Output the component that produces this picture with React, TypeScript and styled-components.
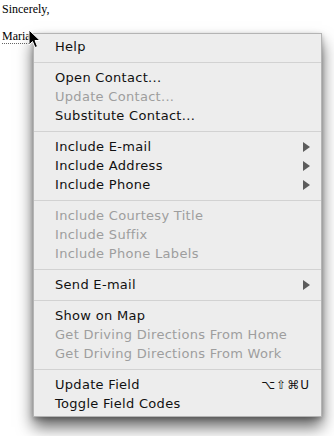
import React from "react";
import styled, { createGlobalStyle } from "styled-components";

const GlobalStyle = createGlobalStyle`
  html, body {
    margin: 0;
    padding: 0;
    background: #ffffff;
  }
`;

const Page = styled.div`
  position: relative;
  width: 334px;
  height: 436px;
  overflow: hidden;
  background: #ffffff;
`;

const Letter = styled.div`
  padding: 2px 0 0 2px;
  font-family: "Liberation Serif", "Times New Roman", serif;
  font-size: 12px;
  line-height: 14px;
  color: #000;
`;

const Line = styled.div<{ gap?: number }>`
  margin-top: ${(p) => p.gap ?? 0}px;
`;

const Field = styled.span`
  border-bottom: 1px dotted #666;
`;

const Cursor = styled.svg`
  position: absolute;
  left: 28px;
  top: 29px;
  z-index: 3;
`;

const Menu = styled.ul`
  position: absolute;
  left: 33px;
  top: 33px;
  width: 287px;
  margin: 0;
  padding: 3px 0;
  list-style: none;
  background: #ededed;
  border: 1px solid #b4b4b4;
  box-shadow: 0 10px 15px rgba(0, 0, 0, 0.6), 0 2px 5px rgba(0, 0, 0, 0.25);
  font-family: "DejaVu Sans", "Lucida Grande", sans-serif;
  font-size: 13px;
  letter-spacing: 0.3px;
  z-index: 2;
`;

const Item = styled.li<{ disabled?: boolean }>`
  height: 19px;
  display: flex;
  align-items: center;
  justify-content: space-between;
  padding: 0 11px 0 21px;
  color: ${(p) => (p.disabled ? "#9e9e9e" : "#111")};
  white-space: nowrap;
`;

const Separator = styled.li`
  height: 12px;
  display: flex;
  align-items: center;

  &::after {
    content: "";
    flex: 1;
    height: 1px;
    background: #d2d2d2;
  }
`;

const Arrow = styled.span`
  width: 0;
  height: 0;
  border-top: 5px solid transparent;
  border-bottom: 5px solid transparent;
  border-left: 7px solid #5c5c5c;
`;

const Shortcut = styled.span`
  font-size: 12px;
  letter-spacing: 1px;
  color: #111;
`;

type Entry =
  | { sep: true }
  | { label: string; disabled?: boolean; submenu?: boolean; keys?: string };

const entries: Entry[] = [
  { label: "Help" },
  { sep: true },
  { label: "Open Contact..." },
  { label: "Update Contact...", disabled: true },
  { label: "Substitute Contact..." },
  { sep: true },
  { label: "Include E-mail", submenu: true },
  { label: "Include Address", submenu: true },
  { label: "Include Phone", submenu: true },
  { sep: true },
  { label: "Include Courtesy Title", disabled: true },
  { label: "Include Suffix", disabled: true },
  { label: "Include Phone Labels", disabled: true },
  { sep: true },
  { label: "Send E-mail", submenu: true },
  { sep: true },
  { label: "Show on Map" },
  { label: "Get Driving Directions From Home", disabled: true },
  { label: "Get Driving Directions From Work", disabled: true },
  { sep: true },
  { label: "Update Field", keys: "⌥⇧⌘U" },
  { label: "Toggle Field Codes" },
];

const App = () => {
  return (
    <Page>
      <GlobalStyle />
      <Letter>
        <Line>Sincerely,</Line>
        <Line gap={13}>
          <Field>Maria</Field>
        </Line>
      </Letter>

      <Cursor width="13" height="21" viewBox="0 0 13 21">
        <path
          d="M1 1 L1 16 L4.5 12.5 L7 18.5 L9.5 17.5 L7 11.5 L12 11.5 Z"
          fill="#000"
          stroke="#fff"
          strokeWidth="1"
          strokeLinejoin="round"
        />
      </Cursor>

      <Menu>
        {entries.map((e, i) =>
          "sep" in e ? (
            <Separator key={i} />
          ) : (
            <Item key={i} disabled={e.disabled}>
              <span>{e.label}</span>
              {e.submenu && <Arrow />}
              {e.keys && <Shortcut>{e.keys}</Shortcut>}
            </Item>
          )
        )}
      </Menu>
    </Page>
  );
};

export default App;
